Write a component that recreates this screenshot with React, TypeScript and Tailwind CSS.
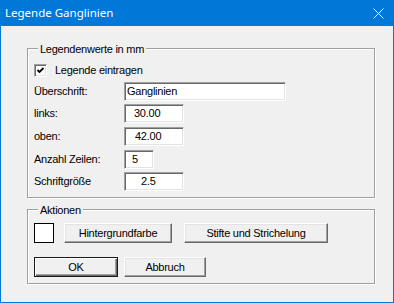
import React from 'react';

const sunken =
  'bg-white border border-t-[#a0a0a0] border-l-[#a0a0a0] border-r-white border-b-white shadow-[inset_1px_1px_0_#696969,inset_-1px_-1px_0_#e3e3e3]';
const raised =
  'bg-[#f0f0f0] border border-t-white border-l-white border-r-[#696969] border-b-[#696969] shadow-[inset_-1px_-1px_0_#a0a0a0,inset_1px_1px_0_#e3e3e3]';
const etched = 'relative border border-[#a0a0a0] shadow-[inset_1px_1px_0_#fff,1px_1px_0_#fff]';

function GroupLabel({ children }: { children: React.ReactNode }) {
  return (
    <span className="absolute top-[-6px] left-[10px] px-[2px] bg-[#f0f0f0] leading-[13px]">{children}</span>
  );
}

function Field({ label, value, width, pad, className }: { label: string; value: string; width: string; pad: string; className: string }) {
  return (
    <div className={`flex items-center h-[19px] ${className}`}>
      <span className="w-[90px]">{label}</span>
      <div className={`${sunken} ${width} ${pad} h-[19px] flex items-center`}>{value}</div>
    </div>
  );
}

export default function App() {
  return (
    <div
      className="w-[394px] h-[303px] flex flex-col text-black text-[11px] tracking-[-0.25px]"
      style={{ fontFamily: '"Liberation Sans", Arial, sans-serif' }}
    >
      <div className="h-[26px] shrink-0 bg-[#0078d7] flex items-center justify-between pl-[5px] pr-[10px]">
        <span className="text-white text-[11.5px] tracking-normal" style={{ fontFamily: '"Noto Sans", sans-serif' }}>
          Legende Ganglinien
        </span>
        <svg width="11" height="11" viewBox="0 0 11 11" className="text-white">
          <path d="M0.5 0.5 L10.5 10.5 M10.5 0.5 L0.5 10.5" stroke="currentColor" strokeWidth="1" />
        </svg>
      </div>

      <div className="flex-1 bg-[#f0f0f0] border-x border-b border-[#0078d7] pl-[26px] pt-[22px]">
        <div className={`${etched} w-[348px] h-[150px] pl-[6px] pt-[15px]`}>
          <GroupLabel>Legendenwerte in mm</GroupLabel>
          <div className="flex items-center h-[13px] gap-[8px]">
            <div className={`${sunken} w-[13px] h-[13px] flex items-center justify-center`}>
              <svg width="9" height="9" viewBox="0 0 9 9">
                <polyline points="1.5,4 3.5,6 7.5,2" fill="none" stroke="#000" strokeWidth="1.8" />
              </svg>
            </div>
            <span>Legende eintragen</span>
          </div>
          <Field label="Überschrift:" value="Ganglinien" width="w-[162px]" pad="pl-[2px]" className="mt-[5px]" />
          <Field label="links:" value="30.00" width="w-[60px]" pad="pl-[9px]" className="mt-[3px]" />
          <Field label="oben:" value="42.00" width="w-[60px]" pad="pl-[10px]" className="mt-[4px]" />
          <Field label="Anzahl Zeilen:" value="5" width="w-[30px]" pad="pl-[7px]" className="mt-[4px]" />
          <Field label="Schriftgröße" value="2.5" width="w-[60px]" pad="pl-[16px]" className="mt-[3px]" />
        </div>

        <div className={`${etched} w-[348px] h-[75px] mt-[11px] pl-[6px] pt-[13px]`}>
          <GroupLabel>Aktionen</GroupLabel>
          <div className="flex items-center h-[20px]">
            <div className="w-[20px] h-[20px] bg-white border border-black" />
            <button className={`${raised} ml-[10px] w-[108px] h-[20px]`}>Hintergrundfarbe</button>
            <button className={`${raised} ml-[12px] w-[144px] h-[20px]`}>Stifte und Strichelung</button>
          </div>
          <div className="flex items-center h-[20px] mt-[14px] gap-[6px]">
            <button className="w-[84px] h-[20px] bg-[#f0f0f0] border border-[#1a1a1a] shadow-[inset_1px_1px_0_#fff,inset_-1px_-1px_0_#696969,inset_-2px_-2px_0_#a0a0a0]">
              OK
            </button>
            <button className={`${raised} w-[82px] h-[20px]`}>Abbruch</button>
          </div>
        </div>
      </div>
    </div>
  );
}
